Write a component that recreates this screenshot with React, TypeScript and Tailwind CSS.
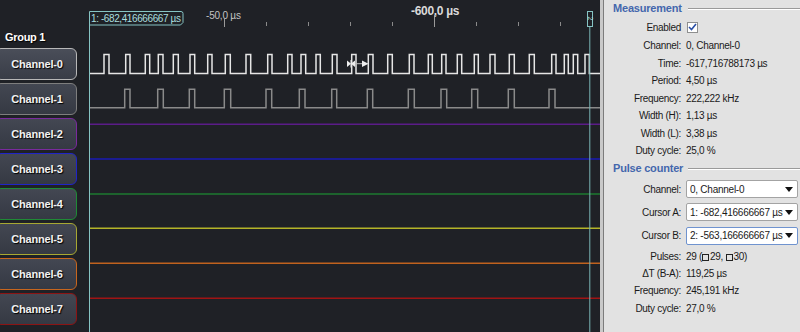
import React from "react"

// pulse edges (rise, fall) in page x, read off the capture
const ch0Pulses: [number, number][] = [
  [104, 109], [125.7, 130], [145.3, 149.7], [158.3, 163], [173.3, 178.3], [190, 194.7],
  [207.7, 212], [225.3, 230.3], [246, 250.7], [267.7, 272], [287.7, 292], [301, 305.7],
  [316, 320.3], [332.3, 337], [351.7, 356], [368.3, 373], [387.7, 392.3], [409.3, 414],
  [428.3, 432.3], [441.7, 446], [457.3, 461.7], [474.3, 478.3], [490, 495], [509.3, 514.3],
  [529.3, 534.3], [551.7, 556], [564.3, 568.3], [573.3, 577.7], [585, 589.3],
]
const ch1Pulses: [number, number][] = [
  [124.7, 130], [157.7, 163.3], [189.3, 194.7], [224.3, 230.7], [266, 271.7], [299.3, 305],
  [331.7, 336.7], [367.3, 372.7], [408.3, 414.3], [441, 446.7], [471.7, 477.7], [508.3, 514.3],
  [549, 555],
]

function pulsePath(pulses: [number, number][], hi: number, lo: number) {
  let d = `M89,${lo}`
  for (const [r, f] of pulses) d += ` L${r},${lo} L${r},${hi} L${f},${hi} L${f},${lo}`
  return d + ` L600,${lo}`
}

const channels = [
  { name: "Channel-0", border: "border-[#b8b8b8]", bg: "from-[#4a4e59] to-[#393d47]" },
  { name: "Channel-1", border: "border-[#7e7e7e]", bg: "from-[#434752] to-[#353943]" },
  { name: "Channel-2", border: "border-[#7a2a9e]", bg: "from-[#434752] to-[#353943]" },
  { name: "Channel-3", border: "border-[#2024c8]", bg: "from-[#434752] to-[#353943]" },
  { name: "Channel-4", border: "border-[#1f8a36]", bg: "from-[#434752] to-[#353943]" },
  { name: "Channel-5", border: "border-[#a8a832]", bg: "from-[#434752] to-[#353943]" },
  { name: "Channel-6", border: "border-[#c8661e]", bg: "from-[#434752] to-[#353943]" },
  { name: "Channel-7", border: "border-[#8c1414]", bg: "from-[#434752] to-[#353943]" },
]

const flatLines = [
  { y: 124.3, c: "#5b1c88" },
  { y: 159, c: "#1a1ab4" },
  { y: 194, c: "#1e7a30" },
  { y: 228.3, c: "#b4b428" },
  { y: 263.3, c: "#c0621e" },
  { y: 298.3, c: "#a01414" },
]

const ticks = [266, 308, 350, 392, 476, 518, 560]

function Row({ label, children, h = "h-[17.5px]" }: { label: string; children: React.ReactNode; h?: string }) {
  return (
    <div className={`grid grid-cols-[77px_1fr] gap-x-[5px] items-center ${h}`}>
      <div className="text-right text-[#1a1a1a]">{label}</div>
      <div className="flex items-center text-[#1a1a1a] whitespace-pre">{children}</div>
    </div>
  )
}

function Section({ title }: { title: string }) {
  return (
    <div className="flex items-center h-[17px] pl-[9px]">
      <span className="w-[74px] font-bold text-[11px] text-[#4467ad] tracking-[-0.2px]">{title}</span>
      <div className="flex-1 ml-[1px] border-t border-[#9a9a9a] border-b-white border-b" />
    </div>
  )
}

function Select({ value, focus }: { value: string; focus?: boolean }) {
  return (
    <div
      className={`flex items-center w-[112px] h-[18px] bg-white rounded-[2px] border pl-[3px] pr-[4px] ${
        focus ? "border-[#6f93cf]" : "border-[#a3a3a3]"
      }`}
    >
      <span className="flex-1 text-[10px] tracking-[-0.25px] whitespace-nowrap overflow-hidden">{value}</span>
      <svg width="8" height="5" viewBox="0 0 8 5">
        <path d="M0,0 L8,0 L4,5 Z" fill="#111" />
      </svg>
    </div>
  )
}

function Box() {
  return <span className="inline-block w-[7px] h-[7px] border border-[#222] mr-[1px] align-[-0.5px]" />
}

export default function App() {
  return (
    <div
      className="flex w-[800px] h-[332px] overflow-hidden bg-[#1f2126]"
      style={{ fontFamily: '"Liberation Sans", Arial, sans-serif' }}
    >
      {/* channel buttons */}
      <div className="w-[78px] shrink-0 pt-[30px]">
        <div className="h-[14px] mb-[4px] pl-[5px] text-[11px] font-bold text-white tracking-[-0.3px] leading-[14px] [text-shadow:1px_1px_1px_#000]">
          Group 1
        </div>
        <div className="flex flex-col gap-[3px]">
          {channels.map((c) => (
            <div
              key={c.name}
              className={`-ml-[5px] w-[82px] h-[32px] rounded-[6px] border-[1.5px] bg-gradient-to-b ${c.bg} ${c.border} flex items-center justify-center`}
            >
              <span className="pl-[2px] text-[11px] font-bold text-[#f2f2f2] tracking-[-0.2px] [text-shadow:1px_1px_1px_#000]">
                {c.name}
              </span>
            </div>
          ))}
        </div>
      </div>

      {/* waveform canvas */}
      <div className="relative w-[522px] shrink-0">
        <svg className="absolute inset-0" width="522" height="332" viewBox="78 0 522 332">
          {ticks.map((x) => (
            <line key={x} x1={x + 0.5} y1="22" x2={x + 0.5} y2="26" stroke="#8a8a8a" strokeWidth="1" />
          ))}
          <line x1="224.5" y1="19" x2="224.5" y2="27" stroke="#9a9a9a" strokeWidth="1" />
          <line x1="434.5" y1="15" x2="434.5" y2="27" stroke="#9a9a9a" strokeWidth="1" />

          <path d={pulsePath(ch0Pulses, 54.5, 73.5)} fill="none" stroke="#e6e6e6" strokeWidth="1.5" />
          <path d={pulsePath(ch1Pulses, 89.3, 107.7)} fill="none" stroke="#8a8a8a" strokeWidth="1.5" />

          {flatLines.map((l) => (
            <line key={l.y} x1="89" y1={l.y} x2="600" y2={l.y} stroke={l.c} strokeWidth="1.5" />
          ))}

          {/* measurement marker */}
          <g fill="#eeeeee" stroke="none">
            <path d="M347,60.5 L351,63.7 L347,67 Z" />
            <path d="M355,60.5 L351,63.7 L355,67 Z" />
            <rect x="350.5" y="60" width="1" height="7.5" />
            <rect x="355" y="63.2" width="7" height="1" fill="#bdbdbd" />
            <path d="M362,60.5 L368.5,63.7 L362,67 Z" />
          </g>

          {/* cursors */}
          <path
            d="M89.5,332 L89.5,11.5 L181,11.5 Q183,11.5 183,13.5 L183,22.5 L180.5,25 L89.5,25"
            fill="#1f2126"
            stroke="#86c4c4"
            strokeWidth="1"
          />
          <line x1="589.8" y1="26" x2="589.8" y2="332" stroke="#7ab6b6" strokeWidth="1" />
          <rect x="587.5" y="11.5" width="5" height="15" fill="#1f2126" stroke="#86c4c4" strokeWidth="1" />
        </svg>

        <div className="absolute left-[13px] top-[11px] h-[14px] flex items-center text-[10px] text-[#a9dede] tracking-[-0.4px] whitespace-nowrap">
          1: -682,416666667 µs
        </div>
        <div className="absolute left-[509px] top-[14px] w-[6px] h-[9px] flex items-center justify-center text-[7px] leading-[7px] text-[#a9dede] rotate-90">
          2
        </div>
        <div className="absolute left-[128px] top-[8px] text-[10px] text-[#c4c4c4] tracking-[-0.2px] whitespace-nowrap">
          -50,0 µs
        </div>
        <div className="absolute left-[333px] top-[2px] text-[12px] font-bold text-[#dadada] tracking-[-0.3px] whitespace-nowrap">
          -600,0 µs
        </div>
      </div>

      {/* splitter */}
      <div className="w-[3px] shrink-0 bg-[#c9c9c9]" />
      <div className="w-[1px] shrink-0 bg-[#7c7c7c]" />

      {/* properties panel */}
      <div className="flex-1 bg-[#e2e2e2] text-[10px] tracking-[-0.3px]">
        <Section title="Measurement" />
        <Row label="Enabled" h="h-[20px]">
          <div className="w-[11px] h-[11px] ml-[1px] bg-white border border-[#8e8f8f] flex items-center justify-center">
            <svg width="9" height="8" viewBox="0 0 9 8">
              <path d="M1,4 L3.5,6.5 L8,1" fill="none" stroke="#2a4fa6" strokeWidth="1.6" />
            </svg>
          </div>
        </Row>
        <Row label="Channel:">0, Channel-0</Row>
        <Row label="Time:">-617,716788173 µs</Row>
        <Row label="Period:">4,50 µs</Row>
        <Row label="Frequency:">222,222 kHz</Row>
        <Row label="Width (H):">1,13 µs</Row>
        <Row label="Width (L):">3,38 µs</Row>
        <Row label="Duty cycle:">25,0 %</Row>
        <div className="h-[18px] flex items-center">
          <div className="w-full">
            <Section title="Pulse counter" />
          </div>
        </div>
        <Row label="Channel:" h="h-[23px]">
          <Select value="0, Channel-0" />
        </Row>
        <Row label="Cursor A:" h="h-[23px]">
          <Select value="1: -682,416666667 µs" />
        </Row>
        <Row label="Cursor B:" h="h-[24.5px]">
          <Select value="2: -563,166666667 µs" focus />
        </Row>
        <Row label="Pulses:" h="h-[17.2px]">
          <span>
            29 (<Box />29, <Box />30)
          </span>
        </Row>
        <Row label="ΔT (B-A):" h="h-[17.2px]">119,25 µs</Row>
        <Row label="Frequency:" h="h-[17.2px]">245,191 kHz</Row>
        <Row label="Duty cycle:" h="h-[17.2px]">27,0 %</Row>
      </div>
    </div>
  )
}
